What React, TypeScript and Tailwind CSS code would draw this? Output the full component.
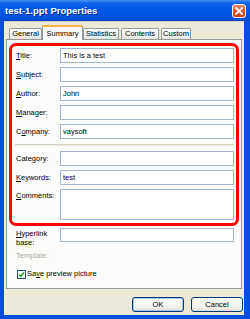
import React from "react";

const inputCls =
  "w-[174px] border border-[#a2b5ce] bg-white flex items-center pl-[2px] text-black";

function Row({
  label,
  value,
  h = 15,
  top = false,
}: {
  label: React.ReactNode;
  value?: string;
  h?: number;
  top?: boolean;
}) {
  return (
    <div className={"flex " + (top ? "items-start" : "items-center")}>
      <span className={"w-[44px] text-black " + (top ? "pt-[3px]" : "")}>{label}</span>
      <div className={inputCls} style={{ height: h }}>
        {value}
      </div>
    </div>
  );
}

function Tab({
  children,
  w,
  ml,
  selected = false,
}: {
  children: React.ReactNode;
  w: string;
  ml: string;
  selected?: boolean;
}) {
  if (selected) {
    return (
      <div
        className={`${w} ${ml} relative z-10 mb-[-1px] h-[15px] rounded-t-[3px] border border-b-0 border-[#919b9c] bg-[#fcfcfe] flex flex-col`}
      >
        <div className="h-[2px] rounded-t-[2px] bg-[#f4b23e] mx-[-1px] mt-[-1px]" />
        <div className="flex-1 flex items-center justify-center text-black">{children}</div>
      </div>
    );
  }
  return (
    <div
      className={`${w} ${ml} h-[11px] rounded-t-[2px] border border-b-0 border-[#919b9c] bg-[linear-gradient(180deg,#ffffff_0%,#f3f3ef_60%,#e6e5de_100%)] flex items-center justify-center text-black`}
    >
      {children}
    </div>
  );
}

export default function App() {
  return (
    <div className="w-[250px] h-[319px] flex flex-col bg-[#0a4ee0] font-['Liberation_Sans',Arial,sans-serif] text-[7.5px] leading-none select-none">
      {/* Title bar */}
      <div className="h-[21px] shrink-0 flex items-center justify-between pl-[5px] pr-[4px] bg-[linear-gradient(180deg,#4a93f6_0%,#0f63ea_14%,#0057e6_45%,#0054e0_80%,#0046c9_100%)]">
        <span className="text-white font-bold text-[9.5px] [text-shadow:1px_1px_0_#0a2a8a]">
          test-1.ppt Properties
        </span>
        <div className="w-[14px] h-[14px] rounded-[3px] border border-white bg-[linear-gradient(180deg,#ec8a68_0%,#e25a33_45%,#cc3e18_100%)] flex items-center justify-center">
          <svg width="8" height="8" viewBox="0 0 8 8">
            <path d="M1 1 L7 7 M7 1 L1 7" stroke="white" strokeWidth="1.8" strokeLinecap="square" />
          </svg>
        </div>
      </div>

      {/* Body */}
      <div className="flex-1 flex flex-col ml-[4px] mr-[6px] mb-[4px] bg-[#ece9d8] border-t border-[#d8d4c4]">
        {/* Tabs */}
        <div className="flex items-end mt-[3px] h-[14px]">
          <Tab w="w-[33px]" ml="ml-[5px]">General</Tab>
          <Tab w="w-[41px]" ml="ml-[0px]" selected>
            Summary
          </Tab>
          <Tab w="w-[36px]" ml="ml-[0px]">Statistics</Tab>
          <Tab w="w-[38px]" ml="ml-[2px]">Contents</Tab>
          <Tab w="w-[30px]" ml="ml-[2px]">Custom</Tab>
        </div>

        {/* Panel */}
        <div className="ml-[2px] w-[236px] h-[250px] border border-[#919b9c] bg-[#fbfbf9] flex flex-col">
          {/* Red highlight box */}
          <div className="mt-[3px] mx-[2px] h-[183px] border-[3px] border-[#ff0000] rounded-[7px] flex flex-col pl-[4px] pr-[2px] pt-[2px]">
            <div className="flex flex-col gap-[4px]">
              <Row label={<><u>T</u>itle:</>} value="This is a test" />
              <Row label={<><u>S</u>ubject:</>} />
              <Row label={<><u>A</u>uthor:</>} value="John" />
              <Row label={<><u>M</u>anager:</>} />
              <Row label={<>C<u>o</u>mpany:</>} value="vaysoft" />
            </div>
            <div className="mt-[5px] ml-[-1px] h-[2px] border-t border-[#d3d0c2] bg-[#efede3]" />
            <div className="mt-[5px] flex flex-col gap-[4px]">
              <Row label={<>Cate<u>g</u>ory:</>} />
              <Row label={<><u>K</u>eywords:</>} value="test" />
              <Row label={<><u>C</u>omments:</>} h={31} top />
            </div>
          </div>

          {/* Below the box */}
          <div className="pl-[9px] mt-[2px] flex items-start">
            <span className="w-[44px] text-black leading-[9px] pt-[1px]">
              <u>H</u>yperlink
              <br />
              base:
            </span>
            <div className={inputCls} style={{ height: 14 }} />
          </div>
          <div className="pl-[9px] mt-[5px] text-[#aca899]">Template:</div>
          <div className="pl-[10px] mt-[10px] flex items-center">
            <div className="w-[9px] h-[9px] border border-[#1c5180] bg-white flex items-center justify-center">
              <svg width="7" height="7" viewBox="0 0 7 7">
                <path d="M1 3.5 L2.8 5.3 L6 1.5" stroke="#21a121" strokeWidth="1.6" fill="none" />
              </svg>
            </div>
            <span className="ml-[1px] text-black">
              Sa<u>v</u>e preview picture
            </span>
          </div>
        </div>

        {/* Buttons */}
        <div className="mt-[8px] flex justify-end gap-[7px] pr-[1px]">
          <div className="w-[52px] h-[15px] rounded-[3px] border border-[#003c74] bg-[linear-gradient(180deg,#ffffff_0%,#f4f4f0_60%,#e2e1d8_100%)] shadow-[inset_0_0_0_1px_#a9c5ef] flex items-center justify-center text-black">
            OK
          </div>
          <div className="w-[52px] h-[15px] rounded-[3px] border border-[#003c74] bg-[linear-gradient(180deg,#ffffff_0%,#f4f4f0_60%,#e2e1d8_100%)] flex items-center justify-center text-black">
            Cancel
          </div>
        </div>
      </div>
    </div>
  );
}
